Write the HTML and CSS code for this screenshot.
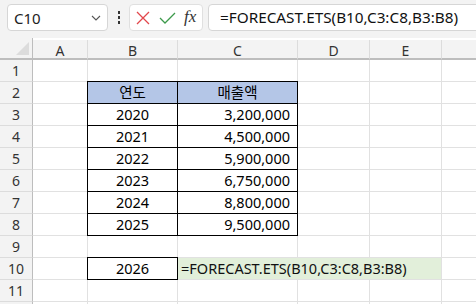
FILE: index.html
```html
<!DOCTYPE html>
<html lang="ko">
<head>
<meta charset="utf-8">
<link rel="stylesheet" href="styles.css">
</head>
<body>
<div class="app">
  <div class="toolbar">
    <div class="namebox">
      <span class="name">C10</span>
      <svg class="chev" width="10" height="6" viewBox="0 0 10 6"><path d="M1 1 L5 5 L9 1" fill="none" stroke="#555" stroke-width="1.1"/></svg>
    </div>
    <div class="dots"><i></i><i></i><i></i></div>
    <div class="iconbox">
      <svg class="ic" width="14" height="14" viewBox="0 0 14 14"><path d="M1 1 L13 13 M13 1 L1 13" stroke="#e2474c" stroke-width="1.3" fill="none"/></svg>
      <svg class="ic" width="17" height="12" viewBox="0 0 17 12"><path d="M1 6 L6 11 L16 1" stroke="#3d9a4b" stroke-width="1.3" fill="none"/></svg>
      <span class="fx">fx</span>
    </div>
    <div class="formula">=FORECAST.ETS(B10,C3:C8,B3:B8)</div>
  </div>
  <div class="sheet">
    <div class="corner"><span class="tri"></span></div>
    <div class="ch">A</div><div class="ch">B</div><div class="ch">C</div><div class="ch">D</div><div class="ch">E</div><div class="ch"></div>

    <div class="rh">1</div><div class="c"></div><div class="c"></div><div class="c"></div><div class="c"></div><div class="c"></div><div class="c"></div>
    <div class="rh">2</div><div class="c"></div><div class="c bx hd">연도</div><div class="c bx hd">매출액</div><div class="c"></div><div class="c"></div><div class="c"></div>
    <div class="rh">3</div><div class="c"></div><div class="c bx ctr">2020</div><div class="c bx num">3,200,000</div><div class="c"></div><div class="c"></div><div class="c"></div>
    <div class="rh">4</div><div class="c"></div><div class="c bx ctr">2021</div><div class="c bx num">4,500,000</div><div class="c"></div><div class="c"></div><div class="c"></div>
    <div class="rh">5</div><div class="c"></div><div class="c bx ctr">2022</div><div class="c bx num">5,900,000</div><div class="c"></div><div class="c"></div><div class="c"></div>
    <div class="rh">6</div><div class="c"></div><div class="c bx ctr">2023</div><div class="c bx num">6,750,000</div><div class="c"></div><div class="c"></div><div class="c"></div>
    <div class="rh">7</div><div class="c"></div><div class="c bx ctr">2024</div><div class="c bx num">8,800,000</div><div class="c"></div><div class="c"></div><div class="c"></div>
    <div class="rh">8</div><div class="c"></div><div class="c bx ctr">2025</div><div class="c bx num">9,500,000</div><div class="c"></div><div class="c"></div><div class="c"></div>
    <div class="rh">9</div><div class="c"></div><div class="c"></div><div class="c"></div><div class="c"></div><div class="c"></div><div class="c"></div>
    <div class="rh">10</div><div class="c"></div><div class="c bx ctr">2026</div><div class="c edit">=FORECAST.ETS(B10,C3:C8,B3:B8)</div><div class="c"></div>
    <div class="rh">11</div><div class="c"></div><div class="c"></div><div class="c"></div><div class="c"></div><div class="c"></div><div class="c"></div>
    <div class="rh"></div><div class="c"></div><div class="c"></div><div class="c"></div><div class="c"></div><div class="c"></div><div class="c"></div>
  </div>
</div>
</body>
</html>
```
FILE: styles.css
```css
html, body {
  margin: 0;
  padding: 0;
}
body {
  width: 476px;
  height: 304px;
  overflow: hidden;
  background: #f3f3f3;
  font-family: "Noto Sans", "Noto Sans CJK KR", sans-serif;
  color: #000;
}
.app {
  width: 476px;
  height: 304px;
  overflow: hidden;
}
.toolbar {
  height: 38px;
  display: flex;
  align-items: flex-start;
  padding-top: 4px;
  box-sizing: border-box;
  white-space: nowrap;
}
.toolbar > * {
  flex-shrink: 0;
}
.namebox {
  margin-left: 7px;
  width: 101px;
  height: 27px;
  box-sizing: border-box;
  background: #fff;
  border: 1px solid #d6d6d6;
  border-radius: 4px;
  display: flex;
  align-items: center;
  padding: 0 6px 0 6px;
  justify-content: space-between;
}
.name {
  font-size: 15px;
  color: #222;
}
.chev { margin-top: 1px; }
.dots {
  width: 21px;
  height: 27px;
  display: flex;
  flex-direction: column;
  align-items: center;
  justify-content: center;
  gap: 2px;
}
.dots i {
  display: block;
  width: 2px;
  height: 3px;
  background: #333;
}
.iconbox {
  width: 74px;
  height: 27px;
  box-sizing: border-box;
  background: #fff;
  border: 1px solid #e0e0e0;
  border-radius: 4px;
  display: flex;
  align-items: center;
  padding-left: 6px;
  gap: 9px;
}
.fx {
  font-family: "Liberation Serif", serif;
  font-style: italic;
  font-size: 17px;
  color: #333;
  margin-left: -1px;
  margin-top: -2px;
}
.formula {
  margin-left: 5px;
  width: 300px;
  height: 27px;
  box-sizing: border-box;
  background: #fff;
  border: 1px solid #d6d6d6;
  border-radius: 4px;
  font-size: 15.3px;
  line-height: 25px;
  padding-left: 11px;
  color: #111;
}
.sheet {
  display: grid;
  grid-template-columns: 33px 55px 90px 120px 72px 72px 72px;
  grid-template-rows: 22px repeat(12, 22px);
  background: #fff;
  font-size: 14.5px;
}
.corner {
  background: #f3f3f3;
  border-right: 1px solid #bdbdbd;
  border-bottom: 2px solid #bdbdbd;
  position: relative;
}
.tri {
  position: absolute;
  right: 3px;
  bottom: 3px;
  width: 0;
  height: 0;
  border-left: 13px solid transparent;
  border-bottom: 13px solid #dcdcdc;
}
.ch {
  background: #f3f3f3;
  border-bottom: 2px solid #bdbdbd;
  border-right: 1px solid #dcdcdc;
  box-sizing: border-box;
  text-align: center;
  font-size: 14px;
  line-height: 21px;
  color: #333;
  margin-top: 2px;
}
.rh {
  background: #f3f3f3;
  border-right: 1px solid #bdbdbd;
  border-bottom: 1px solid #dcdcdc;
  text-align: center;
  font-size: 14px;
  line-height: 21px;
  color: #333;
}
.c {
  border-right: 1px solid #e1e1e1;
  border-bottom: 1px solid #e1e1e1;
  line-height: 21px;
  padding: 0 4px;
  white-space: nowrap;
  overflow: visible;
}
.bx {
  border: 1px solid #000;
  margin: -1px 0 0 -1px;
  z-index: 1;
  line-height: 21px;
}
.hd {
  background: #b4c6e7;
  text-align: center;
}
.ctr { text-align: center; }
.num { text-align: right; padding-right: 7px; }
.edit {
  grid-column: span 3;
  background: #e2efda;
  padding-left: 3px;
  color: #111;
}
```
